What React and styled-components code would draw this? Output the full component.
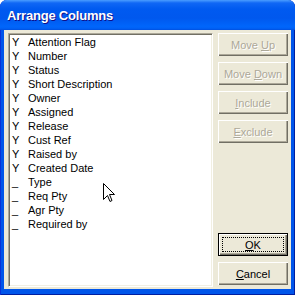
import React from 'react';
import styled, { createGlobalStyle } from 'styled-components';

const columns = [
  { on: true, name: 'Attention Flag' },
  { on: true, name: 'Number' },
  { on: true, name: 'Status' },
  { on: true, name: 'Short Description' },
  { on: true, name: 'Owner' },
  { on: true, name: 'Assigned' },
  { on: true, name: 'Release' },
  { on: true, name: 'Cust Ref' },
  { on: true, name: 'Raised by' },
  { on: true, name: 'Created Date' },
  { on: false, name: 'Type' },
  { on: false, name: 'Req Pty' },
  { on: false, name: 'Agr Pty' },
  { on: false, name: 'Required by' },
];

const sideButtons = [
  ['Move ', 'U', 'p'],
  ['Move ', 'D', 'own'],
  ['', 'I', 'nclude'],
  ['', 'E', 'xclude'],
];

const App = () => (
  <>
    <GlobalStyle />
    <Window>
      <TitleBar>Arrange Columns</TitleBar>
      <Body>
        <ListBox>
          {columns.map(col => (
            <Row key={col.name}>
              <Flag>{col.on ? 'Y' : '_'}</Flag>
              <span>{col.name}</span>
            </Row>
          ))}
        </ListBox>
        <ButtonColumn>
          {sideButtons.map(([pre, key, post]) => (
            <Button key={pre + key + post} disabled>
              <Label>{pre}<u>{key}</u>{post}</Label>
            </Button>
          ))}
          <Spacer />
          <Button primary>
            <Focus><Label><u>O</u>K</Label></Focus>
          </Button>
          <Button>
            <Label><u>C</u>ancel</Label>
          </Button>
        </ButtonColumn>
      </Body>
      <Cursor width="12" height="20" viewBox="0 0 12 20">
        <path
          d="M0.5 0.5 L0.5 16.5 L4.5 12.5 L7 18.5 L9 17.5 L6.5 11.5 L11.5 11.5 Z"
          fill="#fff"
          stroke="#000"
          strokeWidth="1"
        />
      </Cursor>
    </Window>
  </>
);

const GlobalStyle = createGlobalStyle`
  body {
    margin: 0;
    background: #fff;
  }
`;

const Window = styled.div`
  position: relative;
  width: 295px;
  height: 295px;
  display: flex;
  flex-direction: column;
  background: #0055ea;
  border-radius: 7px 7px 0 0;
  overflow: hidden;
  box-shadow: inset 1px 0 #0831d9, inset -1px 0 #001ea0, inset 0 -1px #001ea0;
  font-family: "Liberation Sans", Arial, sans-serif;
`;

const TitleBar = styled.div`
  height: 30px;
  flex: 0 0 30px;
  box-sizing: border-box;
  padding: 1px 0 0 7px;
  display: flex;
  align-items: center;
  color: #fff;
  font-weight: bold;
  font-size: 13px;
  letter-spacing: -0.2px;
  text-shadow: 1px 1px #0f1089;
  background: linear-gradient(
    to bottom,
    #4a9dff 0%,
    #1067f5 10%,
    #005af0 30%,
    #0058ee 60%,
    #0066fb 88%,
    #0062f7 94%,
    #0050e0 100%
  );
`;

const Body = styled.div`
  flex: 1;
  margin: 0 4px 6px 4px;
  padding: 3px 3px 2px 4px;
  display: flex;
  gap: 5px;
  background: #ece9d8;
`;

const ListBox = styled.div`
  width: 205px;
  box-sizing: border-box;
  padding: 1px 2px;
  background: #fff;
  border-top: 1px solid #aca899;
  border-left: 1px solid #aca899;
  border-bottom: 1px solid #fff;
  border-right: 1px solid #fff;
  box-shadow: inset 1px 1px #716f64, inset -1px -1px #f1efe2;
`;

const Row = styled.div`
  display: flex;
  height: 14px;
  line-height: 14px;
  font-size: 11px;
  color: #000;
  white-space: nowrap;
`;

const Flag = styled.span`
  width: 16px;
  padding-left: 1px;
`;

const ButtonColumn = styled.div`
  width: 70px;
  display: flex;
  flex-direction: column;
  gap: 6px;
  padding-bottom: 2px;
`;

const Spacer = styled.div`
  flex: 1;
`;

const Button = styled.div`
  height: 23px;
  box-sizing: border-box;
  display: flex;
  align-items: center;
  justify-content: center;
  font-size: 11px;
  background: #ece9d8;
  color: ${p => (p.disabled ? '#aca899' : '#000')};
  text-shadow: ${p => (p.disabled ? '1px 1px #fff' : 'none')};
  border: ${p => (p.primary ? '1px solid #000' : '0')};
  box-shadow: inset 1px 1px #fff, inset -1px -1px #716f64, inset -2px -2px #aca899;
`;

const Label = styled.span`
  white-space: pre;

  u {
    text-decoration: underline;
    text-underline-offset: 1px;
  }
`;

const Focus = styled.span`
  align-self: stretch;
  flex: 1;
  margin: 3px;
  display: flex;
  align-items: center;
  justify-content: center;
  border: 1px dotted #000;
`;

const Cursor = styled.svg`
  position: absolute;
  left: 103px;
  top: 183px;
`;

export default App;
